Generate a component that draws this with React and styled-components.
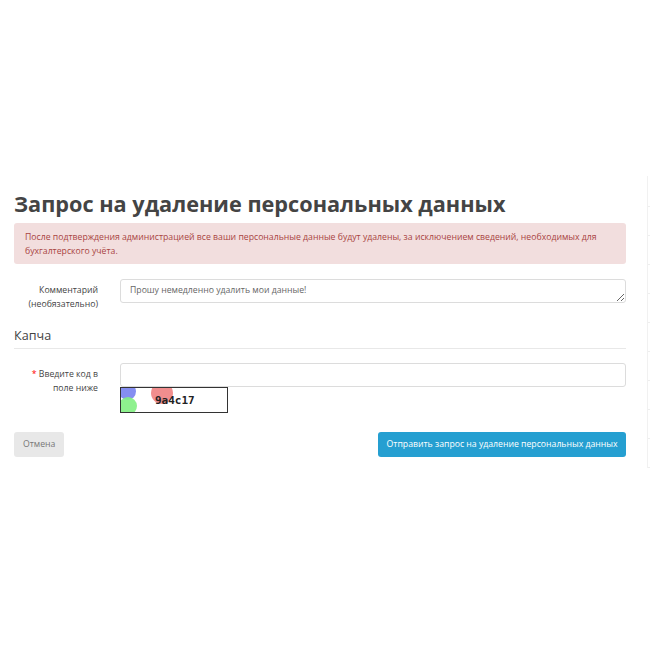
import React from "react";
import styled, { createGlobalStyle } from "styled-components";

const Global = createGlobalStyle`
  html, body { margin: 0; padding: 0; background: #fff; overflow: hidden; }
  body { font-family: "Open Sans", "Noto Sans", sans-serif; color: #555; }
  * { box-sizing: border-box; }
`;

const Page = styled.div`
  display: flex;
  align-items: flex-start;
  padding-left: 14px;
  width: 650px;
  height: 650px;
  overflow: hidden;
`;

const Main = styled.main`
  width: 612px;
  flex: none;
  padding-top: 191px;
`;

const Aside = styled.aside`
  margin-left: 21px;
  margin-top: 176px;
  width: 3px;
  flex: none;
  border-left: 1px solid #f1f1f1;
`;

const SideItem = styled.div`
  height: ${(p) => (p.$first ? 31 : 29)}px;
  border-bottom: 1px solid #eeeeee;
`;

const Title = styled.h1`
  margin: 0;
  font-size: 21.7px;
  line-height: 26px;
  font-weight: 700;
  color: #444;
  white-space: nowrap;
`;

const Alert = styled.div`
  margin-top: 6px;
  background: #f2dede;
  color: #a94442;
  border-radius: 3px;
  padding: 7px 11px 6px;
  font-size: 8.7px;
  line-height: 14px;
`;

const Row = styled.div`
  display: grid;
  grid-template-columns: 96px 1fr;
  column-gap: 10px;
  margin-top: ${(p) => p.$mt}px;
`;

const Label = styled.label`
  text-align: right;
  padding: 5px 12px 0 0;
  font-size: 8.7px;
  line-height: 13.5px;
  color: #444;
`;

const Star = styled.span`
  color: #f00;
`;

const Field = styled.div`
  display: flex;
  flex-direction: column;
  align-items: flex-start;
`;

const TextArea = styled.textarea`
  display: block;
  width: 100%;
  height: 24px;
  min-height: 24px;
  margin: 0;
  padding: 4px 9px;
  border: 1px solid #dcdcdc;
  border-radius: 3px;
  font-family: "Open Sans", sans-serif;
  font-size: 8.7px;
  line-height: 13.5px;
  color: #666;
  resize: vertical;
  overflow: hidden;
  outline: none;
`;

const Input = styled.input`
  display: block;
  width: 100%;
  height: 24px;
  margin: 0;
  padding: 4px 9px;
  border: 1px solid #dcdcdc;
  border-radius: 3px;
  font-family: "Open Sans", sans-serif;
  font-size: 8.7px;
  outline: none;
`;

const Legend = styled.div`
  margin-top: 17px;
  font-size: 12.6px;
  line-height: 16px;
  color: #444;
  padding-bottom: 4px;
  border-bottom: 1px solid #e8e8e8;
`;

const Captcha = styled.div`
  position: relative;
  width: 108px;
  height: 26px;
  border: 1px solid #333;
  background: #fff;
  overflow: hidden;
`;

const Dot = styled.span`
  position: absolute;
  border-radius: 50%;
  background: ${(p) => p.$c};
  left: ${(p) => p.$x}px;
  top: ${(p) => p.$y}px;
  width: ${(p) => p.$s}px;
  height: ${(p) => p.$s}px;
`;

const Code = styled.span`
  position: absolute;
  left: 34px;
  top: 6px;
  font-family: "DejaVu Sans Mono", monospace;
  font-size: 11px;
  line-height: 13px;
  font-weight: 700;
  color: #222;
`;

const Buttons = styled.div`
  display: flex;
  justify-content: space-between;
  margin-top: 19px;
`;

const Button = styled.button`
  height: 25px;
  padding: 0 ${(p) => (p.$primary ? 8.5 : 9)}px;
  border: none;
  border-radius: 3px;
  font-family: "Open Sans", sans-serif;
  font-size: 8.7px;
  line-height: 25px;
  background: ${(p) => (p.$primary ? "#259fd1" : "#e8e8e8")};
  color: ${(p) => (p.$primary ? "#fff" : "#777")};
  cursor: pointer;
`;

export default function App() {
  return (
    <>
      <Global />
      <Page>
        <Main>
          <Title>Запрос на удаление персональных данных</Title>
          <Alert>
            После подтверждения администрацией все ваши персональные данные будут удалены, за исключением сведений, необходимых для бухгалтерского учёта.
          </Alert>
          <Row $mt={15}>
            <Label>Комментарий (необязательно)</Label>
            <Field>
              <TextArea defaultValue="Прошу немедленно удалить мои данные!" />
            </Field>
          </Row>
          <Legend>Капча</Legend>
          <Row $mt={14}>
            <Label>
              <Star>*</Star> Введите код в поле ниже
            </Label>
            <Field>
              <Input />
              <Captcha>
                <Dot $c="rgba(120,130,240,0.9)" $x={-2} $y={-5} $s={17} />
                <Dot $c="rgba(130,240,130,0.9)" $x={-2} $y={9} $s={18} />
                <Dot $c="rgba(240,130,130,0.9)" $x={30} $y={-6} $s={22} />
                <Code>9a4c17</Code>
              </Captcha>
            </Field>
          </Row>
          <Buttons>
            <Button>Отмена</Button>
            <Button $primary>Отправить запрос на удаление персональных данных</Button>
          </Buttons>
        </Main>
        <Aside>
          <SideItem $first />
          {Array.from({ length: 9 }).map((_, i) => (
            <SideItem key={i} />
          ))}
        </Aside>
      </Page>
    </>
  );
}
